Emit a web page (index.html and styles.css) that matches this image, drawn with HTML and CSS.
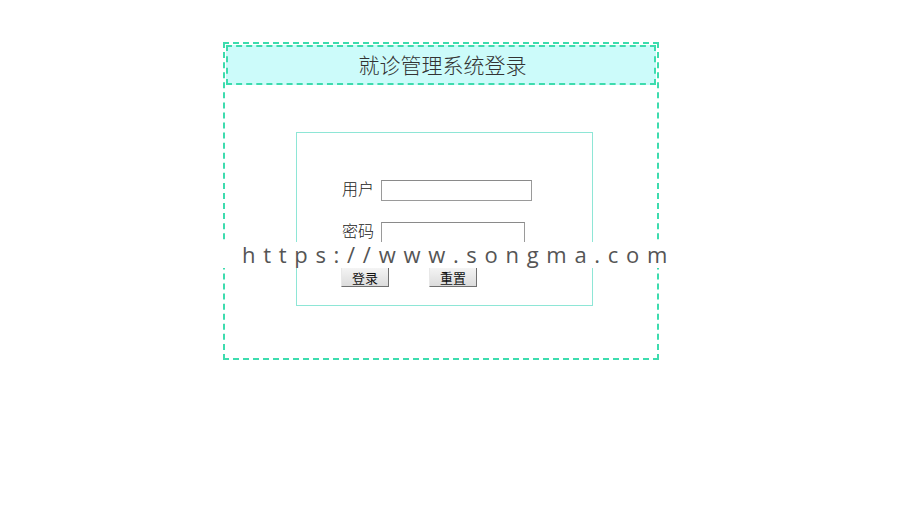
FILE: index.html
```html
<!DOCTYPE html>
<html lang="zh-CN">
<head>
<meta charset="utf-8">
<title>就诊管理系统登录</title>
<link rel="stylesheet" href="styles.css">
</head>
<body>
<div class="outer">
  <div class="header">就诊管理系统登录</div>
  <div class="panel">
    <div class="row">
      <span class="label">用户</span>
      <input class="field field-user" type="text">
    </div>
    <div class="row">
      <span class="label">密码</span>
      <input class="field field-pass" type="password">
    </div>
    <div class="buttons">
      <button class="btn">登录</button>
      <button class="btn">重置</button>
    </div>
  </div>
</div>
<div class="watermark">https://www.songma.com</div>
</body>
</html>
```
FILE: styles.css
```css
html, body {
  margin: 0;
  padding: 0;
  background: #ffffff;
}
body {
  position: relative;
  width: 900px;
  height: 510px;
  font-family: "Liberation Serif", "Noto Sans CJK SC", serif;
}
.outer {
  box-sizing: border-box;
  margin: 42px 0 0 223px;
  width: 436px;
  height: 318px;
  border: 2px dashed #3ddcae;
  padding: 1px 0 0 1px;
}
.header {
  box-sizing: border-box;
  width: 430px;
  height: 40px;
  border: 2px dashed #3ddcae;
  background: #ccfbfa;
  color: #333;
  font-size: 21px;
  line-height: 34px;
  text-align: center;
  padding-left: 3px;
  font-family: "Noto Sans CJK SC", sans-serif;
  font-weight: 300;
}
.panel {
  box-sizing: border-box;
  margin: 47px 0 0 70px;
  width: 297px;
  height: 174px;
  border: 1px solid #8ee6d6;
  padding: 47px 0 0 45px;
  display: flex;
  flex-direction: column;
  gap: 21px;
}
.row {
  display: flex;
  align-items: center;
  height: 21px;
}
.label {
  font-family: "Noto Sans CJK SC", sans-serif;
  font-size: 16px;
  font-weight: 300;
  color: #222;
  width: 39px;
  line-height: 21px;
  position: relative;
  top: -2px;
}
.field {
  box-sizing: border-box;
  height: 21px;
  margin: 0;
  border: 1px solid #9a9a9a;
  border-top-color: #8a8a8a;
  background: #fff;
  padding: 0 2px;
}
.field-user { width: 151px; }
.field-pass { width: 144px; }
.buttons {
  display: flex;
  gap: 40px;
  margin-top: 3px;
  margin-left: -1px;
}
.btn {
  box-sizing: border-box;
  width: 48px;
  height: 20px;
  margin: 0;
  padding: 0;
  font-family: "Noto Sans CJK SC", sans-serif;
  font-size: 13px;
  line-height: 17px;
  color: #111;
  background: linear-gradient(#f4f4f4, #dcdcdc);
  border: 1px solid;
  border-color: #e8e8e8 #707070 #707070 #e8e8e8;
}
.watermark {
  position: absolute;
  left: 218px;
  top: 242px;
  width: 454px;
  height: 26px;
  background: #ffffff;
  color: #555;
  font-family: "Open Sans", sans-serif;
  font-size: 22px;
  line-height: 24px;
  letter-spacing: 7.7px;
  padding-left: 24px;
  box-sizing: border-box;
  white-space: nowrap;
}
```
